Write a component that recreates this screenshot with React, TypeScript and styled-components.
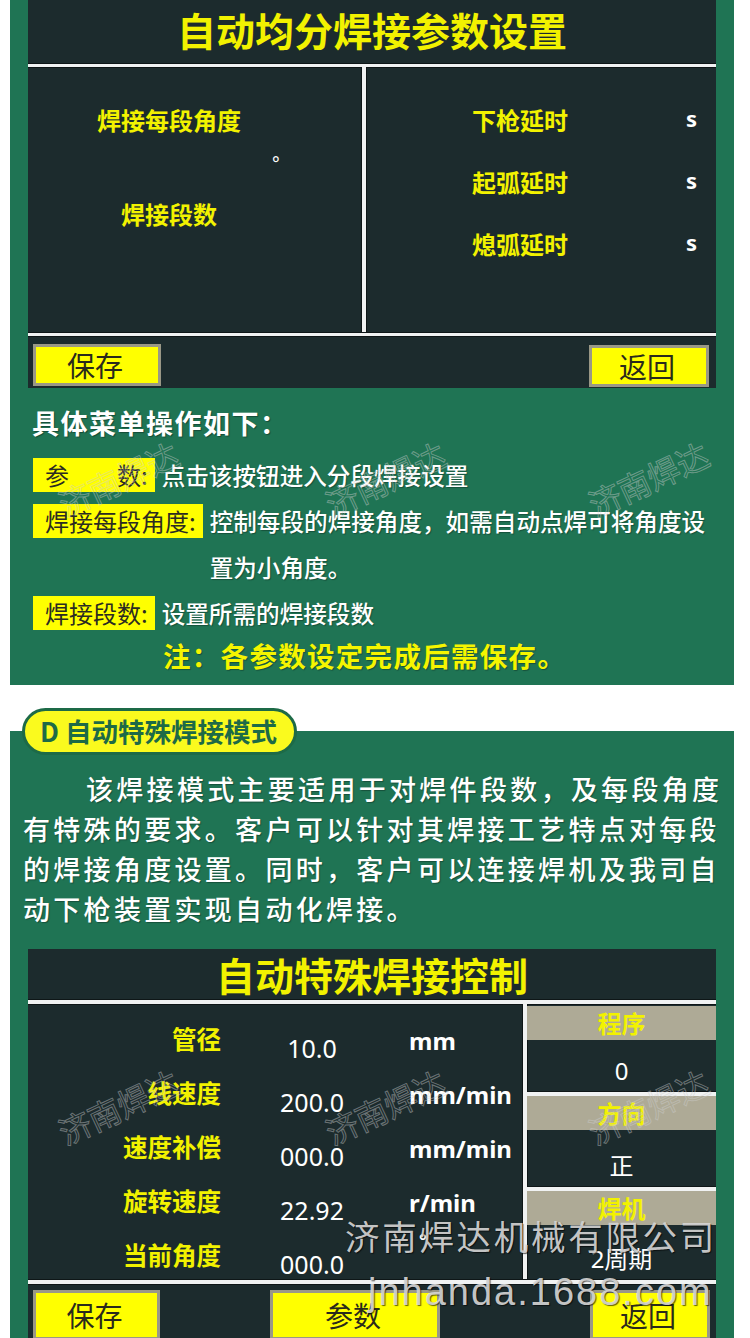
import React from 'react';
import styled, { createGlobalStyle } from 'styled-components';

const CJK = `"Noto Sans CJK SC", "Noto Sans", sans-serif`;
const LATIN = `"Noto Sans", "Noto Sans CJK SC", sans-serif`;

const GREEN = '#1f7454';
const DARK = '#1c2b2d';
const HMI_YELLOW = '#f2f200';
const BTN_YELLOW = '#ffff00';
const RULE = '#f0f2f2';

const Global = createGlobalStyle`
  html, body { margin: 0; padding: 0; background: #ffffff; }
  body { font-family: ${CJK}; }
  * { box-sizing: border-box; }
`;

const Page = styled.div`
  position: relative;
  width: 750px;
  height: 1338px;
  overflow: hidden;
  background: #ffffff;
`;

const Section = styled.section<{ $top?: number; $height: number }>`
  position: relative;
  margin: ${(p) => p.$top ?? 0}px 16px 0 10px;
  height: ${(p) => p.$height}px;
  background: ${GREEN};
`;

const Panel = styled.div<{ $top?: number; $height: number }>`
  margin: ${(p) => p.$top ?? 0}px 18px 0 18px;
  height: ${(p) => p.$height}px;
  background: ${DARK};
  display: flex;
  flex-direction: column;
`;

const TitleBar = styled.div<{ $h: number; $lift: number }>`
  flex: none;
  height: ${(p) => p.$h}px;
  display: flex;
  align-items: center;
  justify-content: center;
  padding-bottom: ${(p) => p.$lift}px;
  color: ${HMI_YELLOW};
  font-size: 39px;
  font-weight: 700;
  line-height: 44px;
`;

const Rule = styled.div<{ $h?: number }>`
  flex: none;
  height: ${(p) => p.$h ?? 3}px;
  background: ${RULE};
  box-shadow: 0 1px 0 #0e1617, 0 -1px 0 #0e1617;
`;

const SplitBody = styled.div`
  flex: none;
  height: 266px;
  display: grid;
  grid-template-columns: 334px 4px 1fr;
`;

const VRule = styled.div`
  background: ${RULE};
  box-shadow: 1px 0 0 #0e1617, -1px 0 0 #0e1617;
`;

const LeftParams = styled.div`
  display: flex;
  flex-direction: column;
  align-items: flex-start;
  padding: 38px 0 0 41px;
`;

const HmiLabel = styled.div<{ $gap?: number }>`
  width: 200px;
  margin-top: ${(p) => p.$gap ?? 0}px;
  text-align: center;
  color: ${HMI_YELLOW};
  font-size: 24px;
  font-weight: 700;
  line-height: 30px;
  white-space: nowrap;
`;

const Degree = styled.div`
  margin: 20px 0 0 203px;
  color: #ffffff;
  font-family: ${LATIN};
  font-size: 18px;
  line-height: 16px;
`;

const RightParams = styled.div`
  display: flex;
  flex-direction: column;
  gap: 32px;
  padding-top: 38px;
`;

const DelayRow = styled.div`
  display: grid;
  grid-template-columns: 308px 1fr;
  align-items: center;
`;

const DelayLabel = styled.div`
  text-align: center;
  color: ${HMI_YELLOW};
  font-size: 24px;
  font-weight: 700;
  line-height: 30px;
`;

const UnitS = styled.div`
  padding-left: 12px;
  margin-top: -4px;
  color: #ffffff;
  font-family: ${LATIN};
  font-size: 22px;
  font-weight: 700;
  line-height: 30px;
`;

const ButtonBar = styled.div<{ $h: number; $padTop: number }>`
  flex: none;
  height: ${(p) => p.$h}px;
  display: flex;
  align-items: flex-start;
  padding: ${(p) => p.$padTop}px 7px 0 5px;
`;

const HmiButton = styled.div<{ $w: number; $h: number; $ml?: number; $mt?: number }>`
  flex: none;
  width: ${(p) => p.$w}px;
  height: ${(p) => p.$h}px;
  margin-left: ${(p) => p.$ml ?? 0}px;
  margin-top: ${(p) => p.$mt ?? 0}px;
  display: flex;
  align-items: center;
  justify-content: center;
  padding-right: 4px;
  background: ${BTN_YELLOW};
  border: 3px solid #9a9886;
  color: #2a2a1c;
  font-size: 28px;
  font-weight: 400;
  line-height: 1;
`;

const InfoBlock = styled.div`
  padding: 17px 18px 0 22px;
  color: #ffffff;
`;

const InfoHeading = styled.div`
  font-size: 27px;
  font-weight: 700;
  line-height: 36px;
  letter-spacing: 1.5px;
  text-shadow: 1px 1px 1px rgba(0, 0, 0, 0.35);
`;

const DefList = styled.div`
  margin-top: 11px;
  padding-left: 1px;
`;

const DefRow = styled.div`
  display: flex;
  align-items: flex-start;
`;

const Tag = styled.span`
  flex: none;
  height: 34px;
  margin-top: 6px;
  padding: 0 7px 0 12px;
  background: ${BTN_YELLOW};
  color: #2b2b22;
  font-size: 24px;
  line-height: 34px;
  white-space: pre;
`;

const Desc = styled.span`
  flex: 1;
  margin-left: 7px;
  color: #ffffff;
  font-size: 23.6px;
  font-weight: 500;
  line-height: 46px;
  text-shadow: 1px 1px 1px rgba(0, 0, 0, 0.3);
`;

const Note = styled.div`
  padding-left: 131px;
  color: #f5f500;
  font-size: 27.5px;
  font-weight: 700;
  letter-spacing: 1.3px;
  line-height: 38px;
  text-shadow: 1px 1px 1px rgba(0, 0, 0, 0.3);
`;

const Pill = styled.div`
  position: absolute;
  left: 12px;
  top: -23px;
  width: 275px;
  height: 47px;
  display: flex;
  align-items: center;
  padding-left: 15px;
  border: 3px solid #1d6a47;
  border-radius: 24px;
  background: #fafa1e;
  color: #1d6a47;
  font-size: 26.5px;
  font-weight: 700;
  line-height: 1;
  white-space: nowrap;
`;

const Intro = styled.p`
  margin: 0;
  padding: 38px 4px 0 13px;
  color: #ffffff;
  font-size: 27px;
  font-weight: 500;
  letter-spacing: 3.3px;
  line-height: 40px;
  text-indent: 63px;
  white-space: nowrap;
  text-shadow: 1px 1px 1px rgba(0, 0, 0, 0.3);
`;

const ControlBody = styled.div`
  flex: none;
  height: 276px;
  display: grid;
  grid-template-columns: 495px 4px 1fr;
`;

const ReadoutList = styled.div`
  display: flex;
  flex-direction: column;
  padding-top: 8px;
`;

const Readout = styled.div`
  height: 54px;
  display: grid;
  grid-template-columns: 193px 182px 1fr;
  align-items: center;
`;

const ReadLabel = styled.div`
  text-align: right;
  color: ${HMI_YELLOW};
  font-size: 24.5px;
  font-weight: 700;
  line-height: 30px;
  white-space: nowrap;
`;

const ReadValue = styled.div`
  margin-top: 18px;
  text-align: center;
  color: #ffffff;
  font-family: ${LATIN};
  font-size: 25px;
  line-height: 30px;
`;

const ReadUnit = styled.div<{ $small?: boolean }>`
  margin-top: ${(p) => (p.$small ? -30 : 4)}px;
  padding-left: ${(p) => (p.$small ? 16 : 6)}px;
  color: #ffffff;
  font-family: ${LATIN};
  font-size: ${(p) => (p.$small ? 18 : 24)}px;
  font-weight: 700;
  line-height: 30px;
  white-space: nowrap;
`;

const StatusCol = styled.div`
  display: flex;
  flex-direction: column;
  padding-top: 2px;
`;

const StatusHead = styled.div`
  flex: none;
  height: 34px;
  display: flex;
  align-items: center;
  justify-content: center;
  background: #aeaa96;
  color: ${HMI_YELLOW};
  font-size: 24px;
  font-weight: 700;
  line-height: 1;
`;

const StatusValue = styled.div<{ $h: number }>`
  flex: none;
  height: ${(p) => p.$h}px;
  display: flex;
  align-items: flex-end;
  justify-content: center;
  padding-bottom: 6px;
  color: #ffffff;
  font-family: ${LATIN};
  font-size: 24px;
  line-height: 30px;
`;

const Stamp = styled.span<{ $x: number; $y: number }>`
  position: absolute;
  left: ${(p) => p.$x - 64}px;
  top: ${(p) => p.$y - 16}px;
  font-family: ${CJK};
  font-size: 32px;
  line-height: 32px;
  color: transparent;
  -webkit-text-stroke: 1px rgba(205, 205, 205, 0.45);
  transform: rotate(-25deg);
  white-space: nowrap;
  pointer-events: none;
`;

const CompanyMark = styled.div`
  position: absolute;
  left: 345px;
  top: 1214px;
  font-family: ${CJK};
  font-size: 34.5px;
  letter-spacing: 2.7px;
  line-height: 42px;
  color: rgba(214, 214, 214, 0.92);
  text-shadow: 1px 1px 1px rgba(0, 0, 0, 0.6);
  white-space: nowrap;
  pointer-events: none;
`;

const SiteMark = styled.div`
  position: absolute;
  left: 368px;
  top: 1269px;
  font-family: "Liberation Sans", Arial, sans-serif;
  font-size: 38px;
  letter-spacing: 2px;
  line-height: 46px;
  color: rgba(214, 214, 214, 0.92);
  text-shadow: 1px 1px 1px rgba(0, 0, 0, 0.6);
  white-space: nowrap;
  pointer-events: none;
`;

const readouts = [
  { label: '管径', value: '10.0', unit: 'mm' },
  { label: '线速度', value: '200.0', unit: 'mm/min' },
  { label: '速度补偿', value: '000.0', unit: 'mm/min' },
  { label: '旋转速度', value: '22.92', unit: 'r/min' },
  { label: '当前角度', value: '000.0', unit: '°', small: true },
];

const stampXs = [118, 385, 648];

export default function App() {
  return (
    <Page>
      <Global />
      <Section $height={685}>
        <Panel $height={388}>
          <TitleBar $h={64} $lift={6}>自动均分焊接参数设置</TitleBar>
          <Rule />
          <SplitBody>
            <LeftParams>
              <HmiLabel>焊接每段角度</HmiLabel>
              <Degree>°</Degree>
              <HmiLabel $gap={28}>焊接段数</HmiLabel>
            </LeftParams>
            <VRule />
            <RightParams>
              <DelayRow>
                <DelayLabel>下枪延时</DelayLabel>
                <UnitS>s</UnitS>
              </DelayRow>
              <DelayRow>
                <DelayLabel>起弧延时</DelayLabel>
                <UnitS>s</UnitS>
              </DelayRow>
              <DelayRow>
                <DelayLabel>熄弧延时</DelayLabel>
                <UnitS>s</UnitS>
              </DelayRow>
            </RightParams>
          </SplitBody>
          <Rule />
          <ButtonBar $h={52} $padTop={8}>
            <HmiButton $w={128} $h={42}>保存</HmiButton>
            <HmiButton $w={120} $h={42} $ml={428} $mt={1}>返回</HmiButton>
          </ButtonBar>
        </Panel>
        <InfoBlock>
          <InfoHeading>具体菜单操作如下：</InfoHeading>
          <DefList>
            <DefRow>
              <Tag>参　　数:</Tag>
              <Desc>点击该按钮进入分段焊接设置</Desc>
            </DefRow>
            <DefRow>
              <Tag>焊接每段角度:</Tag>
              <Desc>控制每段的焊接角度，如需自动点焊可将角度设置为小角度。</Desc>
            </DefRow>
            <DefRow>
              <Tag>焊接段数:</Tag>
              <Desc>设置所需的焊接段数</Desc>
            </DefRow>
          </DefList>
          <Note>注：各参数设定完成后需保存。</Note>
        </InfoBlock>
      </Section>

      <Section $top={46} $height={607}>
        <Pill>D 自动特殊焊接模式</Pill>
        <Intro>
          该焊接模式主要适用于对焊件段数，及每段角度
          <br />
          有特殊的要求。客户可以针对其焊接工艺特点对每段
          <br />
          的焊接角度设置。同时，客户可以连接焊机及我司自
          <br />
          动下枪装置实现自动化焊接。
        </Intro>
        <Panel $top={20} $height={389}>
          <TitleBar $h={51} $lift={2}>自动特殊焊接控制</TitleBar>
          <Rule $h={4} />
          <ControlBody>
            <ReadoutList>
              {readouts.map((r) => (
                <Readout key={r.label}>
                  <ReadLabel>{r.label}</ReadLabel>
                  <ReadValue>{r.value}</ReadValue>
                  <ReadUnit $small={r.small}>{r.unit}</ReadUnit>
                </Readout>
              ))}
            </ReadoutList>
            <VRule />
            <StatusCol>
              <StatusHead>程序</StatusHead>
              <StatusValue $h={52}>0</StatusValue>
              <Rule $h={4} />
              <StatusHead>方向</StatusHead>
              <StatusValue $h={57}>正</StatusValue>
              <Rule $h={4} />
              <StatusHead>焊机</StatusHead>
              <StatusValue $h={55}>2周期</StatusValue>
            </StatusCol>
          </ControlBody>
          <Rule $h={4} />
          <ButtonBar $h={54} $padTop={6}>
            <HmiButton $w={127} $h={50}>保存</HmiButton>
            <HmiButton $w={170} $h={50} $ml={110}>参数</HmiButton>
            <HmiButton $w={120} $h={50} $ml={150}>返回</HmiButton>
          </ButtonBar>
        </Panel>
      </Section>

      {stampXs.map((x) => (
        <Stamp key={`a${x}`} $x={x} $y={478}>济南焊达</Stamp>
      ))}
      {stampXs.map((x) => (
        <Stamp key={`b${x}`} $x={x} $y={1106}>济南焊达</Stamp>
      ))}
      <CompanyMark>济南焊达机械有限公司</CompanyMark>
      <SiteMark>jnhanda.1688.com</SiteMark>
    </Page>
  );
}
